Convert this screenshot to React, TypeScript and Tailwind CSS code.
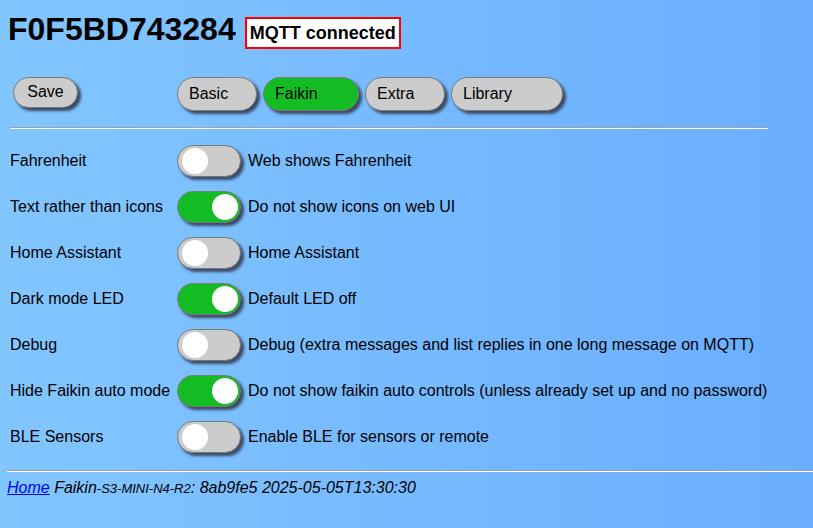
import React from "react";

type Setting = {
  label: string;
  on: boolean;
  desc: string;
};

const settings: Setting[] = [
  { label: "Fahrenheit", on: false, desc: "Web shows Fahrenheit" },
  { label: "Text rather than icons", on: true, desc: "Do not show icons on web UI" },
  { label: "Home Assistant", on: false, desc: "Home Assistant" },
  { label: "Dark mode LED", on: true, desc: "Default LED off" },
  {
    label: "Debug",
    on: false,
    desc: "Debug (extra messages and list replies in one long message on MQTT)",
  },
  {
    label: "Hide Faikin auto mode",
    on: true,
    desc: "Do not show faikin auto controls (unless already set up and no password)",
  },
  { label: "BLE Sensors", on: false, desc: "Enable BLE for sensors or remote" },
];

const tabs = [
  { name: "Basic", w: "w-[80px]", active: false },
  { name: "Faikin", w: "w-[96px]", active: true },
  { name: "Extra", w: "w-[80px]", active: false },
  { name: "Library", w: "w-[112px]", active: false },
];

const Toggle = ({ on }: { on: boolean }) => (
  <div
    className={`flex items-center w-[64px] h-[32px] rounded-full border border-[#7a7a7a] shadow-[3px_3px_3px_#3a4a66] flex-shrink-0 ${
      on ? "bg-[#14bc24] justify-end pr-[2px]" : "bg-[#cccccc] justify-start pl-[4px]"
    }`}
  >
    <div className="w-[26px] h-[26px] rounded-full bg-white"></div>
  </div>
);

const App = () => {
  return (
    <div
      className="min-h-screen w-full bg-gradient-to-r from-[#82c6ff] to-[#6aaeff] text-black text-[16px]"
      style={{ fontFamily: '"Liberation Sans", Arial, sans-serif' }}
    >
      {/* header */}
      <div className="flex items-start pl-[8px] pt-[13px]">
        <h1 className="text-[32px] leading-[32px] font-bold">F0F5BD743284</h1>
        <div className="ml-[9px] mt-[4px] h-[32px] flex items-center border-2 border-[#ff0000] bg-white px-[3px] text-[18px] font-bold">
          MQTT connected
        </div>
      </div>

      {/* buttons */}
      <div className="flex items-start mt-[28px]">
        <button className="ml-[13px] w-[65px] h-[31px] rounded-full border border-[#7a7a7a] bg-[#cccccc] shadow-[3px_3px_3px_#3a4a66] text-[16px] pb-[1px]">
          Save
        </button>
        <div className="flex gap-[6px] ml-[99px]">
          {tabs.map((t) => (
            <button
              key={t.name}
              className={`${t.w} h-[34px] rounded-full border border-[#7a7a7a] shadow-[3px_3px_3px_#3a4a66] text-left pl-[11px] text-[16px] ${
                t.active ? "bg-[#14bc24]" : "bg-[#cccccc]"
              }`}
            >
              {t.name}
            </button>
          ))}
        </div>
      </div>

      <div className="ml-[10px] w-[758px] mt-[16px] border-t border-t-[#a0a0a0] border-b border-b-white"></div>

      {/* settings */}
      <div className="flex flex-col mt-[9px]">
        {settings.map((s) => (
          <div key={s.label} className="flex items-center h-[46px]">
            <div className="w-[177px] pl-[10px] whitespace-nowrap">{s.label}</div>
            <Toggle on={s.on} />
            <div className="ml-[7px] whitespace-nowrap">{s.desc}</div>
          </div>
        ))}
      </div>

      <div className="ml-[7px] mt-[10px] border-t border-t-[#a0a0a0] border-b border-b-white"></div>

      {/* footer */}
      <div className="pl-[7px] mt-[7px] italic leading-[18px]">
        <a href="#" className="text-[#0000ee] underline">
          Home
        </a>{" "}
        Faikin<span className="text-[13px]">-S3-MINI-N4-R2</span>: 8ab9fe5 2025-05-05T13:30:30
      </div>
    </div>
  );
};

export default App;
